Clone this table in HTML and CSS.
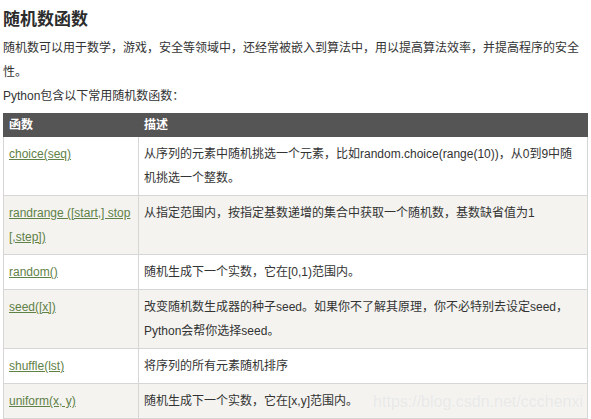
FILE: index.html
```html
<!DOCTYPE html>
<html lang="zh-CN">
<head>
  <meta charset="UTF-8" />
  <meta name="viewport" content="width=device-width, initial-scale=1.0"/>
  <title>随机数函数</title>
  <link rel="stylesheet" href="styles.css">
</head>
<body>
  <div class="article">
    <h3>随机数函数</h3>
    <p>随机数可以用于数学，游戏，安全等领域中，还经常被嵌入到算法中，用以提高算法效率，并提高程序的安全性。</p>
    <p>Python包含以下常用随机数函数：</p>

    <div class="table-wrap">
      <table class="func-table">
        <thead>
          <tr>
            <th class="col-name">函数</th>
            <th>描述</th>
          </tr>
        </thead>
        <tbody>
          <tr>
            <td><a href="#">choice(seq)</a></td>
            <td>从序列的元素中随机挑选一个元素，比如random.choice(range(10))，从0到9中随机挑选一个整数。</td>
          </tr>
          <tr>
            <td><a href="#">randrange ([start,] stop [,step])</a></td>
            <td>从指定范围内，按指定基数递增的集合中获取一个随机数，基数缺省值为1</td>
          </tr>
          <tr>
            <td><a href="#">random()</a></td>
            <td>随机生成下一个实数，它在[0,1)范围内。</td>
          </tr>
          <tr>
            <td><a href="#">seed([x])</a></td>
            <td>改变随机数生成器的种子seed。如果你不了解其原理，你不必特别去设定seed，Python会帮你选择seed。</td>
          </tr>
          <tr>
            <td><a href="#">shuffle(lst)</a></td>
            <td>将序列的所有元素随机排序</td>
          </tr>
          <tr>
            <td><a href="#">uniform(x, y)</a></td>
            <td>随机生成下一个实数，它在[x,y]范围内。</td>
          </tr>
        </tbody>
      </table>
      <span class="watermark">https://blog.csdn.net/ccchenxi</span>
    </div>
  </div>
</body>
</html>
```

FILE: styles.css
```css
html, body {
  margin: 0;
  padding: 0;
  background: white;
}
body {
  font-family: "Liberation Sans", "Noto Sans CJK SC", sans-serif;
  font-size: 12px;
  color: #333;
}
.article {
  padding: 0 3px;
}
h3 {
  font-size: 17px;
  font-weight: bold;
  line-height: 24px;
  margin: 8px 0 4px;
  color: #2c2c2c;
}
p {
  margin: 0;
  line-height: 24px;
}
.table-wrap {
  position: relative;
  margin-top: 5px;
}
.func-table {
  width: 100%;
  border-collapse: collapse;
}
.func-table th {
  background: #555;
  color: white;
  font-weight: bold;
  text-align: left;
  line-height: 13px;
  padding: 5px 5px 4px;
  border: 1px solid #555;
}
.col-name {
  width: 124px;
}
.func-table td {
  vertical-align: top;
  line-height: 24px;
  padding: 5px;
  border: 1px solid #d6d6d6;
}
.func-table tbody tr:nth-child(even) td {
  background: #f4f3f0;
}
.func-table a {
  color: #5f8147;
  text-decoration: underline;
}
.watermark {
  position: absolute;
  right: 5px;
  bottom: 8px;
  font-size: 16px;
  color: #e8e8e6;
  text-shadow: 0 0 1px #fbfbfb;
}
```
